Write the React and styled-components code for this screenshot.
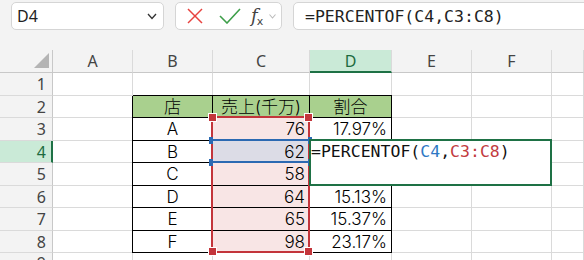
import React from 'react'
import styled, { createGlobalStyle } from 'styled-components'

const GlobalStyle = createGlobalStyle`
  html, body {
    margin: 0;
    padding: 0;
    background: #f3f3f3;
  }
  body {
    width: 584px;
    height: 260px;
    overflow: hidden;
    font-family: 'Noto Sans', sans-serif;
  }
`

const COLS = ['A', 'B', 'C', 'D', 'E', 'F', 'G']
const ACTIVE_COL = 'D'
const ACTIVE_ROW = 4

// rows 2..8 hold the little table in B:D
const TABLE = {
  2: ['店', '売上(千万)', '割合'],
  3: ['A', '76', '17.97%'],
  4: ['B', '62', ''],
  5: ['C', '58', ''],
  6: ['D', '64', '15.13%'],
  7: ['E', '65', '15.37%'],
  8: ['F', '98', '23.17%'],
}

const FILLS = {
  head: '#a9d08e',
  range: '#f8e5e5',
  ref: '#dcdce6',
}

const Page = styled.div`
  width: 584px;
  height: 260px;
  display: flex;
  flex-direction: column;
`

const Toolbar = styled.div`
  box-sizing: border-box;
  height: 50px;
  display: flex;
  align-items: flex-start;
  gap: 11px;
  padding: 2px 0 0 11px;
  overflow: hidden;
`

const Box = styled.div`
  box-sizing: border-box;
  height: 28px;
  background: #fff;
  border: 1px solid #d5d5d5;
  border-radius: 5px;
  display: flex;
  align-items: center;
  flex-shrink: 0;
`

const NameBox = styled(Box)`
  width: 153px;
  justify-content: space-between;
  padding: 0 6px 0 5px;
  font-family: 'Noto Sans', sans-serif;
  font-size: 16px;
  color: #222;
`

const ButtonsBox = styled(Box)`
  width: 107px;
`

const ToolIcon = styled.svg`
  display: block;
  flex-shrink: 0;
  margin-left: ${p => p.$ml}px;
`

const Fx = styled.span`
  margin-left: 10px;
  display: flex;
  align-items: baseline;
  color: #444;
  i {
    font-family: 'DejaVu Serif', serif;
    font-size: 18px;
    line-height: 1;
  }
  span {
    font-family: 'DejaVu Sans', sans-serif;
    font-size: 11px;
    margin-left: -1px;
    position: relative;
    top: 3px;
  }
`

const FormulaBox = styled(Box)`
  width: 320px;
  padding-left: 11px;
  font-family: 'DejaVu Sans Mono', monospace;
  font-size: 16.5px;
  color: #222;
  white-space: nowrap;
`

const Sheet = styled.div`
  position: relative;
  height: 210px;
  display: grid;
  grid-template-columns: 53px 80px 80px 97px 82px 80px 80px 1fr;
  grid-template-rows: 23px 23px 22px 23px 22px 23px 22px 23px 22px 1fr;
  background: #fff;
  overflow: hidden;
`

const Corner = styled.div`
  box-sizing: border-box;
  background: #f3f3f3;
  border-right: 1px solid #c8c8c8;
  border-bottom: 1px solid #c8c8c8;
  display: flex;
  align-items: flex-end;
  justify-content: flex-end;
  padding: 0 3px 4px 0;
`

const ColHead = styled.div`
  box-sizing: border-box;
  background: ${p => (p.$active ? '#caead7' : '#f3f3f3')};
  border-right: 1px solid #dadada;
  border-bottom: ${p => (p.$active ? '2px solid #1e7145' : '1px solid #c8c8c8')};
  color: ${p => (p.$active ? '#1d6a40' : '#444')};
  font-family: 'Noto Sans', sans-serif;
  font-size: 16px;
  line-height: 20px;
  display: flex;
  align-items: center;
  justify-content: center;
  padding-top: ${p => (p.$active ? 1 : 0)}px;
`

const RowHead = styled.div`
  box-sizing: border-box;
  background: ${p => (p.$active ? '#caead7' : '#f3f3f3')};
  border-right: ${p => (p.$active ? '2px solid #1e7145' : '1px solid #c8c8c8')};
  border-bottom: 1px solid #dadada;
  color: ${p => (p.$active ? '#1d6a40' : '#444')};
  font-family: 'Noto Sans', sans-serif;
  font-size: 16px;
  line-height: 20px;
  display: flex;
  align-items: center;
  justify-content: flex-end;
  padding-right: ${p => (p.$active ? 5 : 6)}px;
`

const Cell = styled.div`
  box-sizing: border-box;
  min-width: 0;
  background: ${p => FILLS[p.$fill] || '#fff'};
  border-right: 1px solid ${p => (p.$boxed ? '#000' : '#dadada')};
  border-bottom: 1px solid ${p => (p.$boxed ? '#000' : '#dadada')};
  box-shadow: ${p => (p.$boxed ? '-1px 0 0 #000, 0 -1px 0 #000' : 'none')};
  display: flex;
  align-items: center;
  justify-content: ${p => p.$align || 'flex-start'};
  padding: 0 4px;
  font-family: Inter, 'Noto Sans CJK JP', sans-serif;
  font-weight: 300;
  font-size: ${p => (p.$fill === 'head' ? 17 : 17)}px;
  line-height: 20px;
  color: #000;
  white-space: nowrap;
`

const RangeBox = styled.div`
  position: absolute;
  left: 211px;
  top: 66px;
  width: 99px;
  height: 137px;
  box-sizing: border-box;
  border: 2px solid #c3353b;
  pointer-events: none;
`

const Handle = styled.div`
  position: absolute;
  width: 7px;
  height: 7px;
  background: #c3353b;
  border: 1px solid #fff;
  ${p => (p.$top ? 'top: -5px;' : 'bottom: -5px;')}
  ${p => (p.$left ? 'left: -5px;' : 'right: -5px;')}
`

const RefBox = styled.div`
  position: absolute;
  left: 213px;
  top: 89px;
  width: 95px;
  height: 24px;
  box-sizing: border-box;
  border-top: 2px solid #2b69b2;
  border-bottom: 2px solid #2b69b2;
  pointer-events: none;
`

const RefHandle = styled.div`
  position: absolute;
  width: 4px;
  height: 7px;
  background: #2b69b2;
  ${p => (p.$top ? 'top: -4.5px;' : 'bottom: -4.5px;')}
  ${p => (p.$left ? 'left: -4px;' : 'right: -4px;')}
`

const EditBox = styled.div`
  position: absolute;
  left: 309px;
  top: 89px;
  width: 243px;
  height: 47px;
  box-sizing: border-box;
  border: 2px solid #1e7145;
  background: #fff;
  padding: 1px 0 0 0;
  font-family: 'DejaVu Sans Mono', monospace;
  font-size: 16.5px;
  line-height: 20px;
  color: #111;
  white-space: nowrap;
`

const Ref = styled.span`
  color: ${p => p.$tone};
`

const cellProps = (row, col) => {
  const data = TABLE[row]
  const ci = ['B', 'C', 'D'].indexOf(col)
  if (!data || ci < 0) return { text: '' }
  const head = row === 2
  let fill
  if (head) fill = 'head'
  else if (col === 'C') fill = row === 4 ? 'ref' : 'range'
  return {
    text: data[ci],
    boxed: true,
    fill,
    align: head || col === 'B' ? 'center' : 'flex-end',
  }
}

const SheetGrid = () => {
  const rows = [1, 2, 3, 4, 5, 6, 7, 8, 9]
  return (
    <Sheet>
      <Corner>
        <svg width="15" height="15" viewBox="0 0 15 15">
          <polygon points="15,0 15,15 0,15" fill="#b4b4b4" />
        </svg>
      </Corner>
      {COLS.map(c => (
        <ColHead key={c} $active={c === ACTIVE_COL}>
          {c === 'G' ? '' : c}
        </ColHead>
      ))}
      {rows.map(r => (
        <React.Fragment key={r}>
          <RowHead $active={r === ACTIVE_ROW}>{r}</RowHead>
          {COLS.map(c => {
            const p = cellProps(r, c)
            return (
              <Cell key={c} $boxed={p.boxed} $fill={p.fill} $align={p.align}>
                {p.text}
              </Cell>
            )
          })}
        </React.Fragment>
      ))}

      <RangeBox>
        <Handle $top $left />
        <Handle $top />
        <Handle $left />
        <Handle />
      </RangeBox>
      <RefBox>
        <RefHandle $top $left />
        <RefHandle $top />
        <RefHandle $left />
        <RefHandle />
      </RefBox>
      <EditBox>
        =PERCENTOF(<Ref $tone="#2f78c4">C4</Ref>,<Ref $tone="#c23b3e">C3:C8</Ref>)
      </EditBox>
    </Sheet>
  )
}

export default function App() {
  return (
    <>
      <GlobalStyle />
      <Page>
        <Toolbar>
          <NameBox>
            <span>D4</span>
            <svg width="10" height="7" viewBox="0 0 10 7">
              <polyline points="1,1 5,5.5 9,1" fill="none" stroke="#333" strokeWidth="1.3" />
            </svg>
          </NameBox>
          <ButtonsBox>
            <ToolIcon $ml={11} width="16" height="16" viewBox="0 0 16 16">
              <line x1="1" y1="1" x2="15" y2="15" stroke="#e8423f" strokeWidth="1.5" />
              <line x1="15" y1="1" x2="1" y2="15" stroke="#e8423f" strokeWidth="1.5" />
            </ToolIcon>
            <ToolIcon $ml={16} width="22" height="16" viewBox="0 0 22 16">
              <polyline points="1,8 8,15 21,1" fill="none" stroke="#3e9f4a" strokeWidth="1.6" />
            </ToolIcon>
            <Fx>
              <i>f</i>
              <span>x</span>
            </Fx>
            <ToolIcon $ml={6} width="7" height="5" viewBox="0 0 7 5">
              <polyline points="0.5,0.5 3.5,4 6.5,0.5" fill="none" stroke="#bbb" strokeWidth="1.1" />
            </ToolIcon>
          </ButtonsBox>
          <FormulaBox>=PERCENTOF(C4,C3:C8)</FormulaBox>
        </Toolbar>
        <SheetGrid />
      </Page>
    </>
  )
}
